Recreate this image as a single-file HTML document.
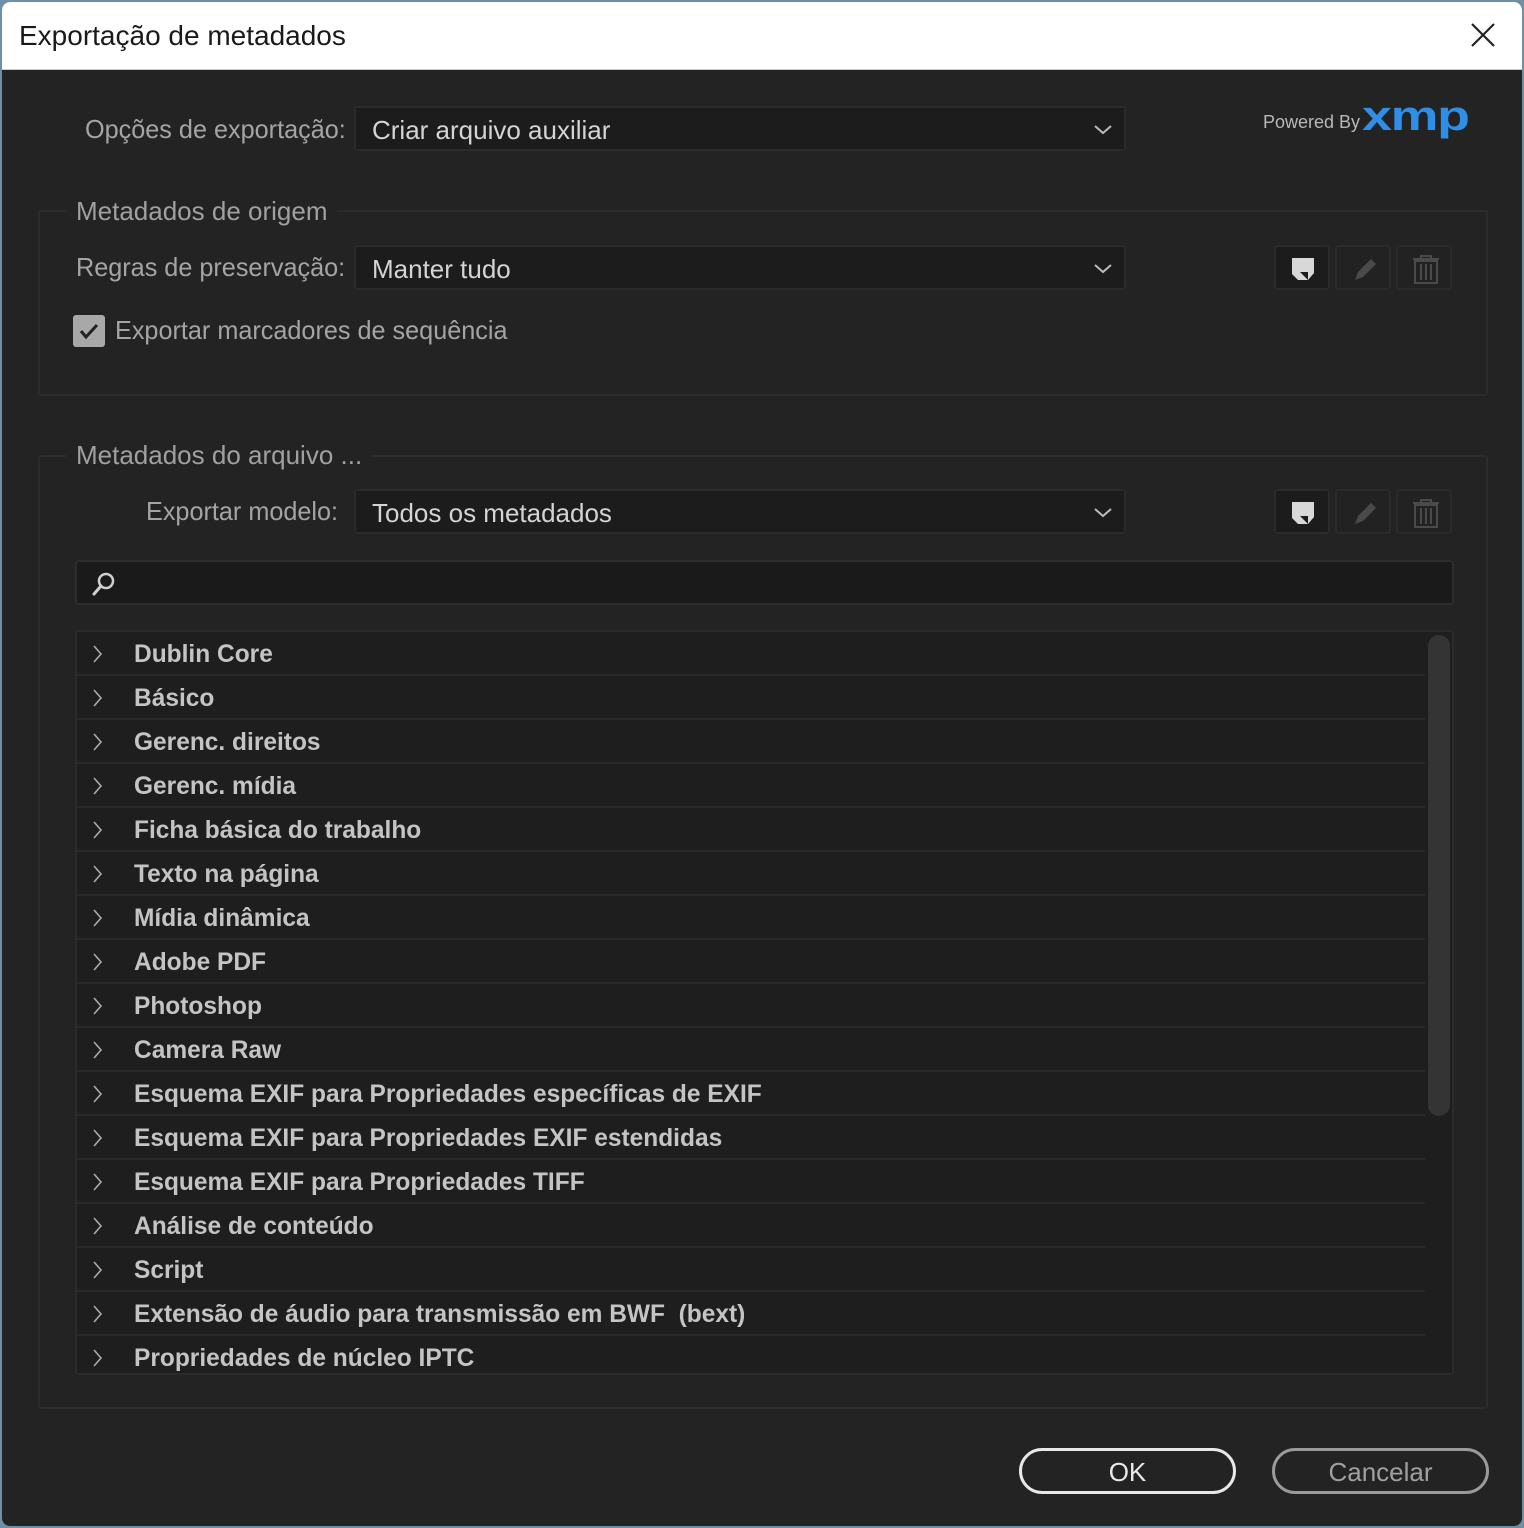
<!DOCTYPE html>
<html><head><meta charset="utf-8">
<style>
*{box-sizing:border-box;margin:0;padding:0}
body{width:1524px;height:1528px;background:#6d8fa8;font-family:"Liberation Sans",sans-serif;overflow:hidden;position:relative}
.win{position:absolute;left:2px;top:2px;width:1520px;height:1524px;background:#232323;border-radius:8px;overflow:hidden}
.title{position:absolute;left:0;top:0;width:1520px;height:68px;background:#fff;border-bottom:1px solid #ccc}
.title span{position:absolute;left:17px;top:18px;font-size:28px;color:#1a1a1a;white-space:nowrap}
.close{position:absolute;right:26px;top:20px}
.abs{position:absolute}
.lbl{position:absolute;font-size:26px;color:#a4a4a4;transform-origin:left top;transform:scaleX(0.97);white-space:nowrap}
.dd{position:absolute;left:352px;width:772px;height:45px;background:#1c1c1c;border:2px solid #2b2b2b;border-radius:3px}
.dd span{position:absolute;left:16px;top:7px;font-size:26px;color:#d4d4d4;white-space:nowrap}
.dd svg{position:absolute;right:10px;top:15px}
.grp{position:absolute;left:36px;width:1450px;border:2px solid #2c2c2c;border-radius:3px}
.gt{position:absolute;background:#232323;padding:0 10px;font-size:26px;color:#a0a0a0;white-space:nowrap}
.ib{position:absolute;width:56px;height:45px;border:2px solid #2b2b2b;border-radius:4px;background:#222}
.ib.a{background:#1c1c1c}
.ib svg{position:absolute;left:0;top:0}
.list{position:absolute;left:73px;top:628px;width:1379px;height:745px;background:#1e1e1e;border:2px solid #2b2b2b;border-radius:3px;overflow:hidden}
.row{position:absolute;left:0;width:1348px;height:44px;border-bottom:2px solid #2a2a2a}
.row svg{position:absolute;left:14px;top:12px}
.row span{position:absolute;left:57px;top:8px;font-size:25px;font-weight:bold;color:#c4c4c4;white-space:nowrap;transform-origin:left top;transform:scaleX(0.98)}
.btn{position:absolute;top:1446px;width:217px;height:46px;border-radius:23px;font-size:26px;text-align:center;line-height:42px}
</style></head><body>
<div class="win">
<div class="title"><span>Exportação de metadados</span>
<svg class="close" width="26" height="26" viewBox="0 0 26 26"><path d="M2 2L24 24M24 2L2 24" stroke="#222" stroke-width="2.2"/></svg></div>

<div class="lbl" style="left:83px;top:112px">Opções de exportação:</div>
<div class="dd" style="top:104px"><span>Criar arquivo auxiliar</span><svg width="22" height="14" viewBox="0 0 22 14"><path d="M3 3l8 7 8-7" fill="none" stroke="#bbb" stroke-width="2"/></svg></div>
<div class="abs" style="left:1261px;top:110px;font-size:18px;color:#b8b8b8;white-space:nowrap">Powered By</div>
<div class="abs" style="left:1360px;top:90px;font-size:42px;font-weight:bold;color:#2f8fe8;letter-spacing:-1px;white-space:nowrap;transform:scaleX(1.28);transform-origin:left top">xmp</div>

<div class="grp" style="top:208px;height:186px"></div>
<div class="gt" style="left:64px;top:194px">Metadados de origem</div>
<div class="lbl" style="left:74px;top:250px">Regras de preservação:</div>
<div class="dd" style="top:243px"><span>Manter tudo</span><svg width="22" height="14" viewBox="0 0 22 14"><path d="M3 3l8 7 8-7" fill="none" stroke="#bbb" stroke-width="2"/></svg></div>

<div class="abs" style="left:71px;top:313px;width:32px;height:32px;background:#a8a8a8;border-radius:3px"><svg width="32" height="32" viewBox="0 0 32 32"><path d="M8 16l5 6 11-12" fill="none" stroke="#222" stroke-width="3"/></svg></div>
<div class="lbl" style="left:113px;top:313px">Exportar marcadores de sequência</div>

<div class="grp" style="top:453px;height:954px"></div>
<div class="gt" style="left:64px;top:438px">Metadados do arquivo ...</div>
<div class="lbl" style="left:144px;top:494px">Exportar modelo:</div>
<div class="dd" style="top:487px"><span>Todos os metadados</span><svg width="22" height="14" viewBox="0 0 22 14"><path d="M3 3l8 7 8-7" fill="none" stroke="#bbb" stroke-width="2"/></svg></div>

<div class="ib a" style="left:1272px;top:243px"><svg width="56" height="45"><path d="M16 11h22v15l-6 7H16z" fill="#d8d8d8"/><path d="M24 25h8v8z" fill="#1c1c1c"/><path d="M16 27l6 6h-6z" fill="#1c1c1c"/></svg></div>
<div class="ib" style="left:1333px;top:243px"><svg width="56" height="45"><path d="M18 33l3-8 13-13 5 5-13 13z" fill="#4a4a4a"/></svg></div>
<div class="ib" style="left:1394px;top:243px"><svg width="56" height="45"><path d="M15 12h26M23 12v-3h10v3M17 14h22v22H17z M23 17v16M28 17v16M33 17v16" fill="none" stroke="#4a4a4a" stroke-width="2"/></svg></div>
<div class="ib a" style="left:1272px;top:487px"><svg width="56" height="45"><path d="M16 11h22v15l-6 7H16z" fill="#d8d8d8"/><path d="M24 25h8v8z" fill="#1c1c1c"/><path d="M16 27l6 6h-6z" fill="#1c1c1c"/></svg></div>
<div class="ib" style="left:1333px;top:487px"><svg width="56" height="45"><path d="M18 33l3-8 13-13 5 5-13 13z" fill="#4a4a4a"/></svg></div>
<div class="ib" style="left:1394px;top:487px"><svg width="56" height="45"><path d="M15 12h26M23 12v-3h10v3M17 14h22v22H17z M23 17v16M28 17v16M33 17v16" fill="none" stroke="#4a4a4a" stroke-width="2"/></svg></div>

<div class="abs" style="left:73px;top:558px;width:1379px;height:45px;background:#1a1a1a;border:2px solid #2d2d2d;border-radius:4px"><svg style="position:absolute;left:12px;top:8px" width="30" height="30" viewBox="0 0 30 30"><circle cx="17" cy="11" r="7" fill="none" stroke="#d0d0d0" stroke-width="2.5"/><path d="M12 16l-7 8" stroke="#d0d0d0" stroke-width="3" stroke-linecap="round"/></svg></div>

<div class="list">
<div class="row" style="top:0"><svg width="14" height="20"><path d="M3 2l7 8-7 8" fill="none" stroke="#aaa" stroke-width="1.6"/></svg><span>Dublin Core</span></div>
<div class="row" style="top:44px"><svg width="14" height="20"><path d="M3 2l7 8-7 8" fill="none" stroke="#aaa" stroke-width="1.6"/></svg><span>Básico</span></div>
<div class="row" style="top:88px"><svg width="14" height="20"><path d="M3 2l7 8-7 8" fill="none" stroke="#aaa" stroke-width="1.6"/></svg><span>Gerenc. direitos</span></div>
<div class="row" style="top:132px"><svg width="14" height="20"><path d="M3 2l7 8-7 8" fill="none" stroke="#aaa" stroke-width="1.6"/></svg><span>Gerenc. mídia</span></div>
<div class="row" style="top:176px"><svg width="14" height="20"><path d="M3 2l7 8-7 8" fill="none" stroke="#aaa" stroke-width="1.6"/></svg><span>Ficha básica do trabalho</span></div>
<div class="row" style="top:220px"><svg width="14" height="20"><path d="M3 2l7 8-7 8" fill="none" stroke="#aaa" stroke-width="1.6"/></svg><span>Texto na página</span></div>
<div class="row" style="top:264px"><svg width="14" height="20"><path d="M3 2l7 8-7 8" fill="none" stroke="#aaa" stroke-width="1.6"/></svg><span>Mídia dinâmica</span></div>
<div class="row" style="top:308px"><svg width="14" height="20"><path d="M3 2l7 8-7 8" fill="none" stroke="#aaa" stroke-width="1.6"/></svg><span>Adobe PDF</span></div>
<div class="row" style="top:352px"><svg width="14" height="20"><path d="M3 2l7 8-7 8" fill="none" stroke="#aaa" stroke-width="1.6"/></svg><span>Photoshop</span></div>
<div class="row" style="top:396px"><svg width="14" height="20"><path d="M3 2l7 8-7 8" fill="none" stroke="#aaa" stroke-width="1.6"/></svg><span>Camera Raw</span></div>
<div class="row" style="top:440px"><svg width="14" height="20"><path d="M3 2l7 8-7 8" fill="none" stroke="#aaa" stroke-width="1.6"/></svg><span>Esquema EXIF para Propriedades específicas de EXIF</span></div>
<div class="row" style="top:484px"><svg width="14" height="20"><path d="M3 2l7 8-7 8" fill="none" stroke="#aaa" stroke-width="1.6"/></svg><span>Esquema EXIF para Propriedades EXIF estendidas</span></div>
<div class="row" style="top:528px"><svg width="14" height="20"><path d="M3 2l7 8-7 8" fill="none" stroke="#aaa" stroke-width="1.6"/></svg><span>Esquema EXIF para Propriedades TIFF</span></div>
<div class="row" style="top:572px"><svg width="14" height="20"><path d="M3 2l7 8-7 8" fill="none" stroke="#aaa" stroke-width="1.6"/></svg><span>Análise de conteúdo</span></div>
<div class="row" style="top:616px"><svg width="14" height="20"><path d="M3 2l7 8-7 8" fill="none" stroke="#aaa" stroke-width="1.6"/></svg><span>Script</span></div>
<div class="row" style="top:660px"><svg width="14" height="20"><path d="M3 2l7 8-7 8" fill="none" stroke="#aaa" stroke-width="1.6"/></svg><span>Extensão de áudio para transmissão em BWF &nbsp;(bext)</span></div>
<div class="row" style="top:704px;border-bottom:none"><svg width="14" height="20"><path d="M3 2l7 8-7 8" fill="none" stroke="#aaa" stroke-width="1.6"/></svg><span>Propriedades de núcleo IPTC</span></div>
<div class="abs" style="left:1351px;top:3px;width:22px;height:481px;background:#343434;border-radius:11px"></div>
</div>

<div class="btn" style="left:1017px;border:3px solid #e8e8e8;color:#e8e8e8">OK</div>
<div class="btn" style="left:1270px;border:3px solid #9a9a9a;color:#a0a0a0">Cancelar</div>
</div>
</body></html>
